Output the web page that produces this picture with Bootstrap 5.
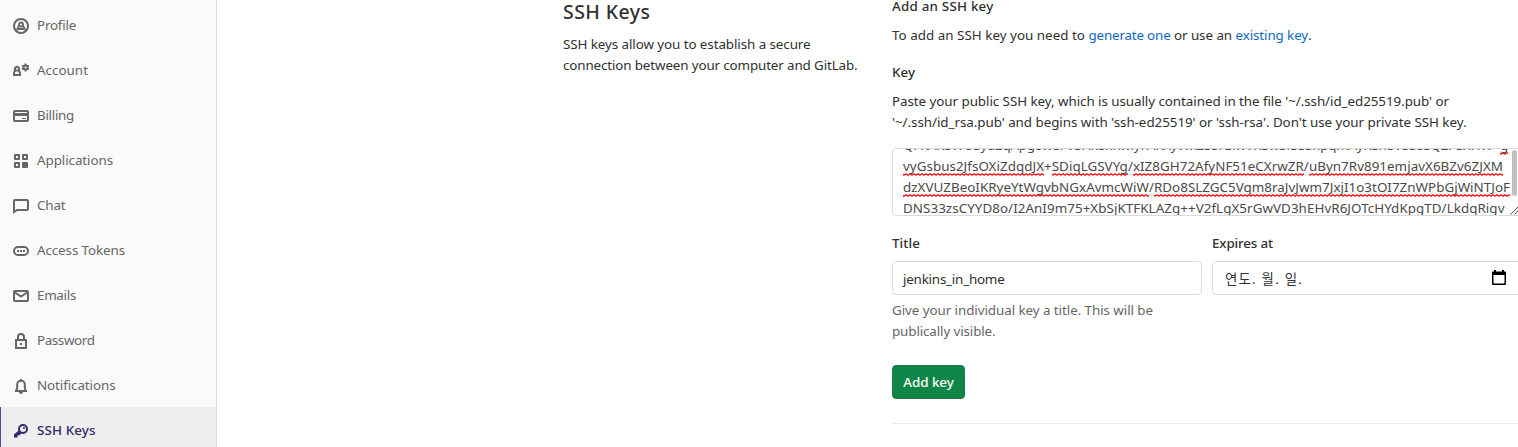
<!DOCTYPE html>
<html lang="ko">
<head>
<meta charset="utf-8">
<meta name="viewport" content="width=device-width, initial-scale=1">
<title>SSH Keys</title>
<link href="https://cdn.jsdelivr.net/npm/bootstrap@5.3.0/dist/css/bootstrap.min.css" rel="stylesheet">
<style>
body{font-family:"Noto Sans","Open Sans","Noto Sans CJK KR",sans-serif;font-size:13.4px;line-height:21px;color:#303030;height:447px;overflow:hidden}
.side{width:217px;background:#fafafa;border-right:1px solid #dbdbdb;height:447px;overflow:hidden;padding-top:2px}
.side .nav-link{height:45px;padding:2px 0 0 13px;gap:8px;color:#666;white-space:nowrap;flex:none}
.side .nav-link svg{width:16px;height:16px;fill:currentColor;flex:none}
.side .nav-link.active{background:#eee;color:#2f2a6b;box-shadow:inset 1px 0 #4b4ba3;font-weight:500}
.intro{width:675px;padding-left:346px}
.intro h4{font-size:19.5px;line-height:24px;font-weight:500;margin:0 0 10px}
.formcol{width:630px;margin-top:-4px}
.ln{display:block;white-space:nowrap}
.lab{font-weight:500;font-size:13.4px;display:block;line-height:21px}
.formcol a{color:#1068bf;text-decoration:none}
.keybox{height:68px;padding:0 10px;overflow:hidden;border-color:#dbdbdb;font-size:13.4px;line-height:21px;color:#4a4a4a;margin:15px 0 17px;border-radius:4px}
.keybox .ln:first-child{margin-top:-14px}
.sp{padding-bottom:2px;background:url("data:image/svg+xml,%3Csvg xmlns='http://www.w3.org/2000/svg' width='4' height='3'%3E%3Cpath d='M-1 0L1 2L3 .5L5 2' transform='translate(0 .3)' fill='none' stroke='red' stroke-width='1.100'/%3E%3C/svg%3E") left bottom 1px/4px 3px repeat-x}
.thumb{right:4px;top:1px;width:5px;height:46px;background:#c1c1c1;border-radius:3px}
.grip{right:1px;bottom:0}
.pair{gap:10px;margin-bottom:23px}
.pair>div{width:310px}
.inp{height:34px;margin:7px 0 5px;padding:1px 10px 0;border-color:#dbdbdb;font-size:13.4px;line-height:22px;color:#303030;border-radius:4px}
.date-inp{padding:0 15px 0 12px}
.date-inp span{padding-top:2px}
.date-inp svg{margin-top:-2px}
.btn-add{background:#108548;border:1px solid #217645;color:#fff;width:73px;height:34px;padding:0;font-size:13.4px;font-weight:500;border-radius:4px}
.help{color:#666}
.rule{margin:24px 0 0;border-top:1px solid #eaeaea;opacity:1}
</style>
</head>
<body>
<div class="d-flex">
<nav class="side nav flex-column flex-nowrap flex-shrink-0">
<a class="nav-link d-flex align-items-center" href="#"><svg viewBox="0 0 16 16"><circle cx="8" cy="8" r="7" fill="none" stroke="currentColor" stroke-width="2"/><circle cx="8" cy="6.500" r="2" fill="none" stroke="currentColor" stroke-width="1.800"/><path fill="none" stroke="currentColor" stroke-width="1.800" d="M6.500 7.500C5.300 8.300 4.600 9.600 3.900 12.200M9.500 7.500c1.200.8 1.900 2.100 2.600 4.700M4.600 11h6.800"/></svg><span data-w="39">Profile</span></a>
<a class="nav-link d-flex align-items-center" href="#"><svg viewBox="0 0 16 16"><path fill="none" stroke="currentColor" stroke-width="2" d="M2.500 7.500a2.100 2.100 0 1 1 3 0C6.500 8.300 7 9 7 10v2H1v-2c0-1 .5-1.700 1.500-2.500zM2.500 7.500h3"/><circle cx="12.500" cy="4.500" r="2" fill="none" stroke="currentColor" stroke-width="2"/><path stroke="currentColor" stroke-width="1.800" d="M12.500 .5v2m0 4v2M9 2.500l1.700 1m3.600 2 1.700 1m0-4-1.700 1m-3.600 2-1.700 1"/></svg><span data-w="51">Account</span></a>
<a class="nav-link d-flex align-items-center" href="#"><svg viewBox="0 0 16 16"><path fill-rule="evenodd" d="M2 2h12a2 2 0 0 1 2 2v8a2 2 0 0 1-2 2H2a2 2 0 0 1-2-2V4a2 2 0 0 1 2-2m0 2v1h12V4zm0 4v4h12V8zm7 2h4v1H9z"/></svg><span data-w="37">Billing</span></a>
<a class="nav-link d-flex align-items-center" href="#"><svg viewBox="0 0 16 16"><path fill="none" stroke="currentColor" stroke-width="2" stroke-linejoin="round" d="M2 2h4v4H2zM10 2h4v4h-4zM2 10h4v4H2z"/><rect x="9" y="9" width="6" height="6" rx="1"/></svg><span data-w="76">Applications</span></a>
<a class="nav-link d-flex align-items-center" href="#"><svg viewBox="0 0 16 16"><path fill="none" stroke="currentColor" stroke-width="2" d="M1 14V3a1 1 0 0 1 1-1h12a1 1 0 0 1 1 1v8a1 1 0 0 1-1 1H4.200z"/></svg><span data-w="28.5">Chat</span></a>
<a class="nav-link d-flex align-items-center" href="#"><svg viewBox="0 0 16 16"><rect x="1" y="4" width="14" height="8" rx="4" fill="none" stroke="currentColor" stroke-width="2"/><path d="M4 7h2v2H4zM7 7h2v2H7zM10 7h2v2h-2z"/></svg><span data-w="88">Access Tokens</span></a>
<a class="nav-link d-flex align-items-center" href="#"><svg viewBox="0 0 16 16"><path fill="none" stroke="currentColor" stroke-width="2" d="M2 3h12a1 1 0 0 1 1 1v8a1 1 0 0 1-1 1H2a1 1 0 0 1-1-1V4a1 1 0 0 1 1-1ZM2 4.500l6 4 6-4"/></svg><span data-w="39">Emails</span></a>
<a class="nav-link d-flex align-items-center" href="#"><svg viewBox="0 0 16 16"><path fill="none" stroke="currentColor" stroke-width="2" d="M3 7h10v8H3zM5 7V4a3 3 0 0 1 6 0v3"/><path d="M7 10h2v2H7z"/></svg><span data-w="57.5">Password</span></a>
<a class="nav-link d-flex align-items-center" href="#"><svg viewBox="0 0 16 16"><path fill="none" stroke="currentColor" stroke-width="2" d="M2 13h12M3.300 12.500 4.200 10V6.500a3.800 3.800 0 0 1 7.600 0V10l.9 2.500"/><path d="M7 1h2v2H7zM6 14h4a2 2 0 0 1-4 0"/></svg><span data-w="78.5">Notifications</span></a>
<a class="nav-link d-flex align-items-center active" href="#"><svg viewBox="0 0 16 16"><circle cx="10" cy="6" r="4" fill="none" stroke="currentColor" stroke-width="2"/><circle cx="11" cy="5" r="1"/><path d="m6 7.200 2.800 2.800L6 12.500H4.500v2H1v-3z"/></svg><span data-w="58.500">SSH Keys</span></a>
</nav>
<main class="d-flex flex-shrink-0">
<section class="intro flex-shrink-0">
<h4><span data-w="87.5">SSH Keys</span></h4>
<div class="ln"><span data-w="247.500">SSH keys allow you to establish a secure</span></div>
<div class="ln"><span data-w="294.500">connection between your computer and GitLab.</span></div>
</section>
<section class="formcol flex-shrink-0">
<h5 class="lab mb-2"><span data-w="101.500">Add an SSH key</span></h5>
<p class="ln mb-3"><span data-w="196.500">To add an SSH key you need to </span><a href="#"><span data-w="82">generate one</span></a><span data-w="65"> or use an </span><a href="#"><span data-w="72">existing key</span></a>.</p>
<label class="lab mb-2"><span data-w="23">Key</span></label>
<div class="ln"><span data-w="557">Paste your public SSH key, which is usually contained in the file '~/.ssh/id_ed25519.pub' or</span></div>
<div class="ln"><span data-w="574.500">'~/.ssh/id_rsa.pub' and begins with 'ssh-ed25519' or 'ssh-rsa'. Don't use your private SSH key.</span></div>
<div class="keybox form-control position-relative">
<div class="ln"><span data-w="605">QFRARSWUSyd2qApg0w8FVSHx5xRwlyFARXyWxZSSfGiwVR3wSf3SShpqmAyKSn8VSS8SQZPSXHW+<span class="sp">g</span></span></div>
<div class="ln"><span data-w="600"><span class="sp">vyGsbus2JfsOXiZdqdJX</span>+<span class="sp">SDiqLGSVYg</span>/<span class="sp">xIZ8GH72AfyNF51eCXrwZR</span>/<span class="sp">uByn7Rv891emjavX6BZv6ZJXM</span></span></div>
<div class="ln"><span data-w="607"><span class="sp">dzXVUZBeoIKRyeYtWgvbNGxAvmcWiW</span>/<span class="sp">RDo8SLZGC5Vqm8raJvJwm7JxjI1o3tOI7ZnWPbGjWiNTJoF</span></span></div>
<div class="ln"><span data-w="601.500">DNS33zsCYYD8o/I2AnI9m75+XbSjKTFKLAZg++V2fLgX5rGwVD3hEHvR6JOTcHYdKpgTD/LkdqRigv</span></div>
<span class="thumb position-absolute"></span>
<svg class="grip position-absolute" width="11" height="10"><path d="M1.500 9.500l9-9M5.500 9.500l5-5" stroke="#555" fill="none"/></svg>
</div>
<div class="pair d-flex">
<div>
<label class="lab"><span data-w="28">Title</span></label>
<div class="inp form-control d-flex align-items-center"><span data-w="101.500">jenkins_in_home</span></div>
<div class="ln help"><span data-w="261">Give your individual key a title. This will be</span></div>
<div class="ln help"><span data-w="103.500">publically visible.</span></div>
</div>
<div>
<label class="lab"><span data-w="61">Expires at</span></label>
<div class="inp date-inp form-control d-flex align-items-center justify-content-between"><span data-w="78">연도. 월. 일.</span><svg width="14" height="15" viewBox="0 0 14 15"><path fill-rule="evenodd" d="M2 0h2v1.500h6V0h2v1.500h1a1 1 0 0 1 1 1V14a1 1 0 0 1-1 1H1a1 1 0 0 1-1-1V2.500a1 1 0 0 1 1-1h1zM1.500 5v8.500h11V5z"/></svg></div>
</div>
</div>
<button class="btn btn-add d-block"><span data-w="50.500">Add key</span></button>
<hr class="rule">
</section>
</main>
</div>
<script src="https://cdn.jsdelivr.net/npm/bootstrap@5.3.0/dist/js/bootstrap.bundle.min.js"></script>
<script>
document.querySelectorAll('[data-w]').forEach(el => {
  el.style.letterSpacing = (el.dataset.w - el.getBoundingClientRect().width) / el.textContent.length + 'px';
});
</script>
</body>
</html>
